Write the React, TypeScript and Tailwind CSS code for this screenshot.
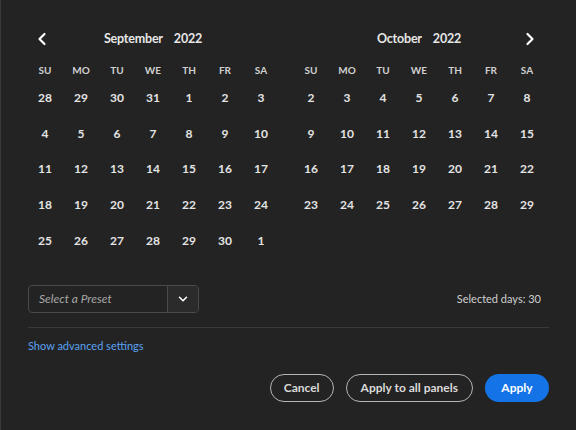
import { ChevronLeft, ChevronRight, ChevronDown } from "lucide-react";

const DAYS = ["SU", "MO", "TU", "WE", "TH", "FR", "SA"];

const SEPT = [
  28, 29, 30, 31, 1, 2, 3,
  4, 5, 6, 7, 8, 9, 10,
  11, 12, 13, 14, 15, 16, 17,
  18, 19, 20, 21, 22, 23, 24,
  25, 26, 27, 28, 29, 30, 1,
];

const OCT = [
  2, 3, 4, 5, 6, 7, 8,
  9, 10, 11, 12, 13, 14, 15,
  16, 17, 18, 19, 20, 21, 22,
  23, 24, 25, 26, 27, 28, 29,
];

function Month({
  name,
  year,
  days,
  side,
}: {
  name: string;
  year: string;
  days: number[];
  side: "left" | "right";
}) {
  return (
    <div className="w-[252px]">
      {/* header */}
      <div className="grid h-6 grid-cols-[36px_1fr_36px] items-center">
        <div className="flex justify-center pr-[6px]">
          {side === "left" && (
            <ChevronLeft className="h-5 w-5 text-white" strokeWidth={2.6} />
          )}
        </div>
        <div className="flex justify-center gap-[11px] text-[12.5px] font-bold tracking-[-0.2px] text-[#e6e6e6]">
          <span>{name}</span>
          <span>{year}</span>
        </div>
        <div className="flex justify-center pl-[6px]">
          {side === "right" && (
            <ChevronRight className="h-5 w-5 text-white" strokeWidth={2.6} />
          )}
        </div>
      </div>

      {/* weekday labels */}
      <div className="mt-[9px] grid h-5 grid-cols-7 items-center">
        {DAYS.map((d) => (
          <span key={d} className="text-center text-[10px] font-bold text-[#d0d0d0]">
            {d}
          </span>
        ))}
      </div>

      {/* days */}
      <div className="grid grid-cols-7">
        {days.map((d, i) => (
          <span
            key={i}
            className="flex h-[35.75px] items-center justify-center text-[12px] font-bold text-[#e4e4e4]"
          >
            {d}
          </span>
        ))}
      </div>
    </div>
  );
}

export default function App() {
  return (
    <div
      className="h-[430px] w-[576px] border-l border-[#383838] bg-[#232323] pl-[26px] pr-[27px] pt-[27px]"
      style={{ fontFamily: "Lato, 'Noto Sans', sans-serif" }}
    >
      {/* ── Calendars ── */}
      <div className="flex gap-[14px]">
        <Month name="September" year="2022" days={SEPT} side="left" />
        <Month name="October" year="2022" days={OCT} side="right" />
      </div>

      {/* ── Preset + count ── */}
      <div className="mt-[26px] flex items-center justify-between pl-[1px] pr-[8px]">
        <div className="flex h-[28px] w-[171px] overflow-hidden rounded-[4px] border border-[#4a4a4a]">
          <div className="flex flex-1 items-center pl-[10px] text-[12px] italic text-[#a8a8a8]">
            Select a Preset
          </div>
          <div className="flex w-[31px] items-center justify-center border-l border-[#4a4a4a] bg-[#2b2b2b]">
            <ChevronDown className="h-[14px] w-[14px] text-white" strokeWidth={2.6} />
          </div>
        </div>
        <span className="text-[11px] text-[#d0d0d0]">Selected days: 30</span>
      </div>

      {/* divider */}
      <div className="ml-[1px] mt-[14px] h-px bg-[#3a3a3a]" />

      <div className="ml-[1px] mt-[10px] text-[11px] text-[#5aa1f2]">
        Show advanced settings
      </div>

      {/* ── Actions ── */}
      <div className="mt-[20px] flex justify-end gap-[12px]">
        <button className="h-[28px] rounded-full border border-[#b5b5b5] px-[13px] text-[12px] font-bold text-[#dadada]">
          Cancel
        </button>
        <button className="h-[28px] rounded-full border border-[#b5b5b5] px-[14px] text-[12px] font-bold text-[#dadada]">
          Apply to all panels
        </button>
        <button className="h-[28px] w-[64px] rounded-full bg-[#1473e6] text-[12px] font-bold text-white">
          Apply
        </button>
      </div>
    </div>
  );
}
